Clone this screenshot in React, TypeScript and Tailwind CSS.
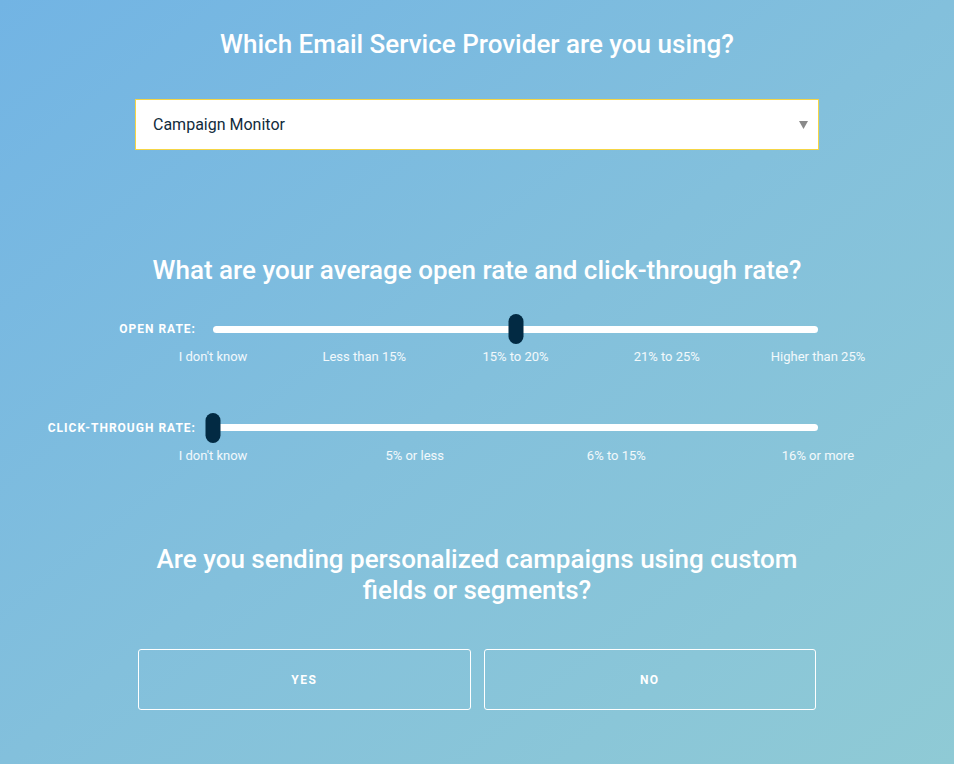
import React, { useState } from "react";

type SliderProps = {
  label: string;
  options: string[];
  value: number;
  onChange: (v: number) => void;
};

const RateSlider: React.FC<SliderProps> = ({ label, options, value, onChange }) => {
  const pct = (value / (options.length - 1)) * 100;
  return (
    <div className="flex flex-col">
      <div className="flex items-center h-[30px]">
        <div className="w-[78px] shrink-0 flex justify-end pr-[17px]">
          <span className="whitespace-nowrap text-[12px] font-bold tracking-[1px] text-white">{label}</span>
        </div>
        <div className="relative w-[605px] h-[7px] rounded-full bg-white">
          <button
            className="absolute top-1/2 w-[15px] h-[30px] -translate-x-1/2 -translate-y-1/2 rounded-full bg-[#022a43]"
            style={{ left: `${pct}%` }}
            aria-label={label}
          />
        </div>
      </div>
      <div className="flex pl-[78px] mt-[3px]">
        <div className="w-[605px] flex justify-between">
          {options.map((o, i) => (
            <div key={o} className="w-0 flex justify-center">
              <button
                className="whitespace-nowrap text-[13px] text-white/90"
                onClick={() => onChange(i)}
              >
                {o}
              </button>
            </div>
          ))}
        </div>
      </div>
    </div>
  );
};

const App: React.FC = () => {
  const [openRate, setOpenRate] = useState(2);
  const [ctr, setCtr] = useState(0);
  const [personalized, setPersonalized] = useState<string | null>(null);

  return (
    <div
      className="min-h-[764px] w-full bg-gradient-to-br from-[#72b4e4] via-[#83c0dc] to-[#8fcad5] text-white"
      style={{ fontFamily: "Roboto, 'Noto Sans', sans-serif" }}
    >
      <div className="w-[684px] mx-auto pt-[28px] flex flex-col">
        <h1 className="text-center text-[26px] font-medium leading-[32px]">
          Which Email Service Provider are you using?
        </h1>

        <div className="mt-[39px] h-[51px] bg-white border border-[#f5d545] flex items-center justify-between pl-[17px] pr-[10px]">
          <span className="text-[16px] text-[#112b3c]">Campaign Monitor</span>
          <svg width="9" height="8" viewBox="0 0 9 8">
            <path d="M0 0 H9 L4.5 8 Z" fill="#8a8a8a" />
          </svg>
        </div>

        <h2 className="mt-[104px] text-center text-[26px] font-medium leading-[32px]">
          What are your average open rate and click-through rate?
        </h2>

        <div className="mt-[28px]">
          <RateSlider
            label="OPEN RATE:"
            options={["I don't know", "Less than 15%", "15% to 20%", "21% to 25%", "Higher than 25%"]}
            value={openRate}
            onChange={setOpenRate}
          />
        </div>

        <div className="mt-[46px]">
          <RateSlider
            label="CLICK-THROUGH RATE:"
            options={["I don't know", "5% or less", "6% to 15%", "16% or more"]}
            value={ctr}
            onChange={setCtr}
          />
        </div>

        <h2 className="mt-[79px] text-center text-[26px] font-medium leading-[31px]">
          Are you sending personalized campaigns using custom fields or segments?
        </h2>

        <div className="mt-[43px] px-[3px] flex gap-[13px]">
          {["YES", "NO"].map(v => (
            <button
              key={v}
              onClick={() => setPersonalized(v)}
              className={`flex-1 h-[61px] rounded-[3px] border border-white text-[12px] font-bold tracking-[1.5px] text-white ${personalized === v ? "bg-white/20" : ""}`}
            >
              {v}
            </button>
          ))}
        </div>
      </div>
    </div>
  );
};

export default App;
